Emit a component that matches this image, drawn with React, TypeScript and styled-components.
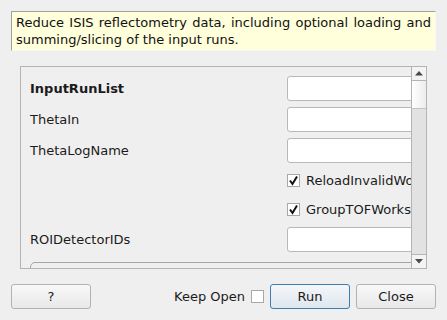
import React from "react";
import styled, { createGlobalStyle } from "styled-components";

const GlobalStyle = createGlobalStyle`
    html, body {
        margin: 0;
        padding: 0;
        background: #efefef;
    }
    body {
        font-family: "DejaVu Sans", "Liberation Sans", sans-serif;
        font-size: 13px;
        color: #1b1b1b;
    }
`

const Dialog = styled.div`
    width: 447px;
    height: 320px;
    box-sizing: border-box;
    padding: 11px 11px 0 11px;
    display: flex;
    flex-direction: column;
    overflow: hidden;
`

const Description = styled.div`
    box-sizing: border-box;
    background: #ffffdc;
    border-top: 1px solid #a0a0a0;
    border-left: 1px solid #a0a0a0;
    border-right: 1px solid #f7f7f7;
    border-bottom: 1px solid #f7f7f7;
    padding: 2px 4px 2px 4px;
    line-height: 17px;
    text-align: justify;
    color: #111;
`

const ScrollFrame = styled.div`
    box-sizing: border-box;
    margin: 15px 9px 0 9px;
    height: 203px;
    border: 1px solid #b4b4b4;
    display: flex;
`

const Viewport = styled.div`
    flex: 1;
    overflow: hidden;
    padding: 9px 0 0 9px;
`

const Form = styled.div`
    display: grid;
    grid-template-columns: 257px 160px;
    row-gap: 6px;
    align-items: center;
`

const Label = styled.div<{ $bold?: boolean }>`
    font-weight: ${p => (p.$bold ? "bold" : "normal")};
    white-space: nowrap;
`

const TextInput = styled.div`
    box-sizing: border-box;
    height: 25px;
    background: #fff;
    border: 1px solid #b8b8b8;
    border-radius: 3px;
`

const CheckRow = styled.div`
    height: 23px;
    display: flex;
    align-items: center;
    gap: 6px;
    white-space: nowrap;
    overflow: hidden;
`

const Box = styled.span`
    box-sizing: border-box;
    width: 13px;
    height: 13px;
    flex: none;
    background: #fff;
    border: 1px solid #a8a8a8;
    display: inline-flex;
    align-items: center;
    justify-content: center;
`

const GroupBox = styled.div`
    margin-top: 10px;
    width: 420px;
    height: 40px;
    border: 1px solid #a6a6a6;
    border-radius: 5px;
`

const ScrollBar = styled.div`
    width: 14px;
    border-left: 1px solid #b4b4b4;
    background: #e2e2e2;
    display: flex;
    flex-direction: column;
`

const ArrowButton = styled.div<{ $down?: boolean }>`
    height: 13px;
    background: #f3f3f3;
    display: flex;
    align-items: center;
    justify-content: center;
    ${p => (p.$down ? "margin-top: auto; border-top: 1px solid #b4b4b4;" : "border-bottom: 1px solid #b4b4b4;")}
`

const Handle = styled.div`
    height: 27px;
    background: linear-gradient(to right, #ffffff, #ececec);
    border-bottom: 1px solid #c4c4c4;
`

const ButtonRow = styled.div`
    margin-top: 15px;
    display: flex;
    align-items: center;
`

const Button = styled.button<{ $primary?: boolean }>`
    box-sizing: border-box;
    width: 80px;
    height: 25px;
    font-family: inherit;
    font-size: 13px;
    color: #1b1b1b;
    border-radius: 3px;
    border: 1px solid ${p => (p.$primary ? "#3d7db2" : "#b2b2b2")};
    background: ${p =>
        p.$primary
            ? "linear-gradient(#f4f7fa, #dfe6ee)"
            : "linear-gradient(#f8f8f8, #e8e8e8)"};
    padding: 0;
`

const KeepOpen = styled.div`
    margin-left: auto;
    display: flex;
    align-items: center;
    gap: 6px;
    margin-right: 6px;
`

const Spacer = styled.div`
    width: 6px;
`

const Check = () => (
    <svg width="11" height="11" viewBox="0 0 11 11">
        <path d="M2 5.5 L4.5 9 L9 1.5" fill="none" stroke="#111" strokeWidth="2" />
    </svg>
)

const Arrow = ({ down }: { down?: boolean }) => (
    <svg width="8" height="5" viewBox="0 0 8 5">
        <path d={down ? "M0 0 H8 L4 4.5 Z" : "M0 4.5 H8 L4 0 Z"} fill="#4a4a4a" />
    </svg>
)

export default function App() {
    return (
        <>
            <GlobalStyle />
            <Dialog>
                <Description>
                    Reduce ISIS reflectometry data, including optional loading and summing/slicing of the input runs.
                </Description>
                <ScrollFrame>
                    <Viewport>
                        <Form>
                            <Label $bold>InputRunList</Label>
                            <TextInput />
                            <Label>ThetaIn</Label>
                            <TextInput />
                            <Label>ThetaLogName</Label>
                            <TextInput />
                            <div />
                            <CheckRow>
                                <Box><Check /></Box>
                                ReloadInvalidWorkspaces
                            </CheckRow>
                            <div />
                            <CheckRow>
                                <Box><Check /></Box>
                                GroupTOFWorkspaces
                            </CheckRow>
                            <Label>ROIDetectorIDs</Label>
                            <TextInput />
                        </Form>
                        <GroupBox />
                    </Viewport>
                    <ScrollBar>
                        <ArrowButton><Arrow /></ArrowButton>
                        <Handle />
                        <ArrowButton $down><Arrow down /></ArrowButton>
                    </ScrollBar>
                </ScrollFrame>
                <ButtonRow>
                    <Button>?</Button>
                    <KeepOpen>
                        Keep Open
                        <Box />
                    </KeepOpen>
                    <Button $primary>Run</Button>
                    <Spacer />
                    <Button>Close</Button>
                </ButtonRow>
            </Dialog>
        </>
    )
}
